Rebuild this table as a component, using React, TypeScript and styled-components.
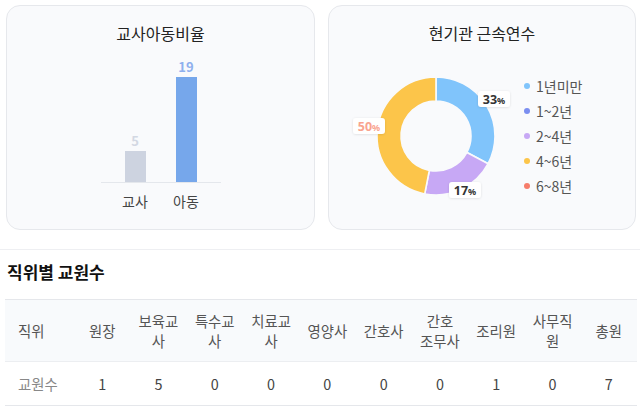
import React from 'react';
import styled, { createGlobalStyle } from 'styled-components';

const GlobalStyle = createGlobalStyle`
  * { box-sizing: border-box; }
  body {
    margin: 0;
    background: #ffffff;
    font-family: "Noto Sans CJK KR", "Noto Sans", sans-serif;
    color: #333;
  }
`;

const Page = styled.div`
  width: 640px;
  padding-top: 5px;
`;

const CardRow = styled.div`
  display: grid;
  grid-template-columns: 309px 308px;
  gap: 13px;
  padding: 0 4px 0 6px;
`;

const Card = styled.div`
  height: 225px;
  background: #f9fafc;
  border: 1px solid #e6e8ec;
  border-radius: 14px;
  padding-top: 15px;
  display: flex;
  flex-direction: column;
  align-items: center;
`;

const CardTitle = styled.div`
  font-size: 16px;
  line-height: 24px;
  color: #222;
`;

/* ---------- bar chart ---------- */

const Plot = styled.div`
  height: 138px;
  padding: 0 9px;
  display: flex;
  align-items: flex-end;
  border-bottom: 1px solid #e4e7ec;
`;

const BarSlot = styled.div`
  width: 51px;
  display: flex;
  flex-direction: column;
  align-items: center;
`;

const BarValue = styled.div<{ $color: string }>`
  font-size: 13px;
  font-weight: 700;
  line-height: 16px;
  margin-bottom: 2px;
  color: ${(p) => p.$color};
`;

const Bar = styled.div<{ $color: string }>`
  width: 21px;
  background: ${(p) => p.$color};
`;

const AxisLabels = styled.div`
  display: flex;
  padding: 0 9px;
  margin-top: 8px;
`;

const AxisLabel = styled.div`
  width: 51px;
  text-align: center;
  font-size: 14px;
  line-height: 20px;
  color: #444;
`;

const bars = [
  { label: '교사', value: 5, height: 31, color: '#cdd3e0', text: '#d3d8e3' },
  { label: '아동', value: 19, height: 105, color: '#76a7eb', text: '#8fb0ee' },
];

/* ---------- donut ---------- */

const DonutBody = styled.div`
  align-self: stretch;
  display: flex;
  padding-left: 22px;
`;

const Legend = styled.ul`
  list-style: none;
  margin: 28px 0 0 0;
  padding: 0;
`;

const LegendItem = styled.li`
  display: flex;
  align-items: center;
  height: 25px;
  font-size: 14px;
  color: #555;
`;

const Dot = styled.span<{ $color: string }>`
  width: 6px;
  height: 6px;
  border-radius: 50%;
  margin: 0 6px 0 3px;
  background: ${(p) => p.$color};
`;

const legend = [
  { label: '1년미만', color: '#80c4fb' },
  { label: '1~2년', color: '#7b8ef0' },
  { label: '2~4년', color: '#c7a8f5' },
  { label: '4~6년', color: '#fcc54a' },
  { label: '6~8년', color: '#f67d6b' },
];

const CX = 85;
const CY = 91;
const R_OUT = 59;
const R_IN = 35;

const polar = (r: number, deg: number) => {
  const a = ((deg - 90) * Math.PI) / 180;
  return [CX + r * Math.cos(a), CY + r * Math.sin(a)];
};

const sector = (from: number, to: number) => {
  const [x1, y1] = polar(R_OUT, from);
  const [x2, y2] = polar(R_OUT, to);
  const [x3, y3] = polar(R_IN, to);
  const [x4, y4] = polar(R_IN, from);
  const large = to - from > 180 ? 1 : 0;
  return `M${x1} ${y1} A${R_OUT} ${R_OUT} 0 ${large} 1 ${x2} ${y2} L${x3} ${y3} A${R_IN} ${R_IN} 0 ${large} 0 ${x4} ${y4} Z`;
};

const slices = [
  { from: 0, to: 118, color: '#80c4fb' },
  { from: 118, to: 191, color: '#c7a8f5' },
  { from: 191, to: 360, color: '#fcc54a' },
];

const tags = [
  { x: 143, y: 54, num: '33', color: '#333' },
  { x: 114, y: 145, num: '17', color: '#333' },
  { x: 18, y: 81, num: '50', color: '#f9a48f' },
];

const Donut = () => (
  <svg width="170" height="180" viewBox="0 0 170 180">
    <defs>
      <filter id="tagShadow" x="-20%" y="-30%" width="140%" height="160%">
        <feDropShadow dx="0" dy="0.5" stdDeviation="1" floodColor="#000" floodOpacity="0.12" />
      </filter>
    </defs>
    {slices.map((s) => (
      <path key={s.from} d={sector(s.from, s.to)} fill={s.color} stroke="#f9fafc" strokeWidth="1.6" />
    ))}
    {tags.map((t) => (
      <g key={t.num}>
        <rect x={t.x - 16} y={t.y - 8} width="32" height="16" rx="3" fill="#fff" filter="url(#tagShadow)" />
        <text
          x={t.x}
          y={t.y + 4.5}
          textAnchor="middle"
          fill={t.color}
          fontSize="12.5"
          fontWeight="700"
          fontFamily="'Noto Sans', sans-serif"
        >
          {t.num}
          <tspan fontSize="9">%</tspan>
        </text>
      </g>
    ))}
  </svg>
);

/* ---------- table ---------- */

const Divider = styled.div`
  height: 1px;
  background: #eeeff2;
  margin-top: 19px;
`;

const SectionTitle = styled.h2`
  margin: 10px 0 0 7px;
  font-size: 17px;
  line-height: 24px;
  font-weight: 700;
  color: #111;
`;

const Table = styled.table`
  margin: 15px 0 0 5px;
  width: 632px;
  table-layout: fixed;
  border-collapse: collapse;
  font-size: 14.4px;
`;

const HeadRow = styled.tr`
  background: #f8fafc;
  border-top: 1px solid #e5e7eb;
  border-bottom: 1px solid #eceef1;
`;

const BodyRow = styled.tr`
  border-bottom: 1px solid #e5e7eb;
`;

const Th = styled.th<{ $first?: boolean }>`
  height: 62px;
  padding: 0 6px 0 ${(p) => (p.$first ? '13px' : '6px')};
  font-weight: 400;
  line-height: 20px;
  color: #555;
  word-break: keep-all;
  overflow-wrap: anywhere;
  text-align: ${(p) => (p.$first ? 'left' : 'center')};
`;

const Td = styled.td<{ $first?: boolean }>`
  height: 44px;
  padding: 0 6px 0 ${(p) => (p.$first ? '13px' : '6px')};
  line-height: 20px;
  color: ${(p) => (p.$first ? '#888' : '#444')};
  text-align: ${(p) => (p.$first ? 'left' : 'center')};
`;

const columns = ['원장', '보육교사', '특수교사', '치료교사', '영양사', '간호사', '간호 조무사', '조리원', '사무직원', '총원'];
const counts = [1, 5, 0, 0, 0, 0, 0, 1, 0, 7];

export default function App() {
  return (
    <Page>
      <GlobalStyle />
      <CardRow>
        <Card>
          <CardTitle>교사아동비율</CardTitle>
          <Plot>
            {bars.map((b) => (
              <BarSlot key={b.label}>
                <BarValue $color={b.text}>{b.value}</BarValue>
                <Bar $color={b.color} style={{ height: b.height }} />
              </BarSlot>
            ))}
          </Plot>
          <AxisLabels>
            {bars.map((b) => (
              <AxisLabel key={b.label}>{b.label}</AxisLabel>
            ))}
          </AxisLabels>
        </Card>
        <Card>
          <CardTitle>현기관 근속연수</CardTitle>
          <DonutBody>
            <Donut />
            <Legend>
              {legend.map((l) => (
                <LegendItem key={l.label}>
                  <Dot $color={l.color} />
                  {l.label}
                </LegendItem>
              ))}
            </Legend>
          </DonutBody>
        </Card>
      </CardRow>
      <Divider />
      <SectionTitle>직위별 교원수</SectionTitle>
      <Table>
        <colgroup>
          <col style={{ width: 69 }} />
          {columns.map((c) => (
            <col key={c} />
          ))}
        </colgroup>
        <thead>
          <HeadRow>
            <Th $first>직위</Th>
            {columns.map((c) => (
              <Th key={c}>{c}</Th>
            ))}
          </HeadRow>
        </thead>
        <tbody>
          <BodyRow>
            <Td $first>교원수</Td>
            {counts.map((n, i) => (
              <Td key={i}>{n}</Td>
            ))}
          </BodyRow>
        </tbody>
      </Table>
    </Page>
  );
}
